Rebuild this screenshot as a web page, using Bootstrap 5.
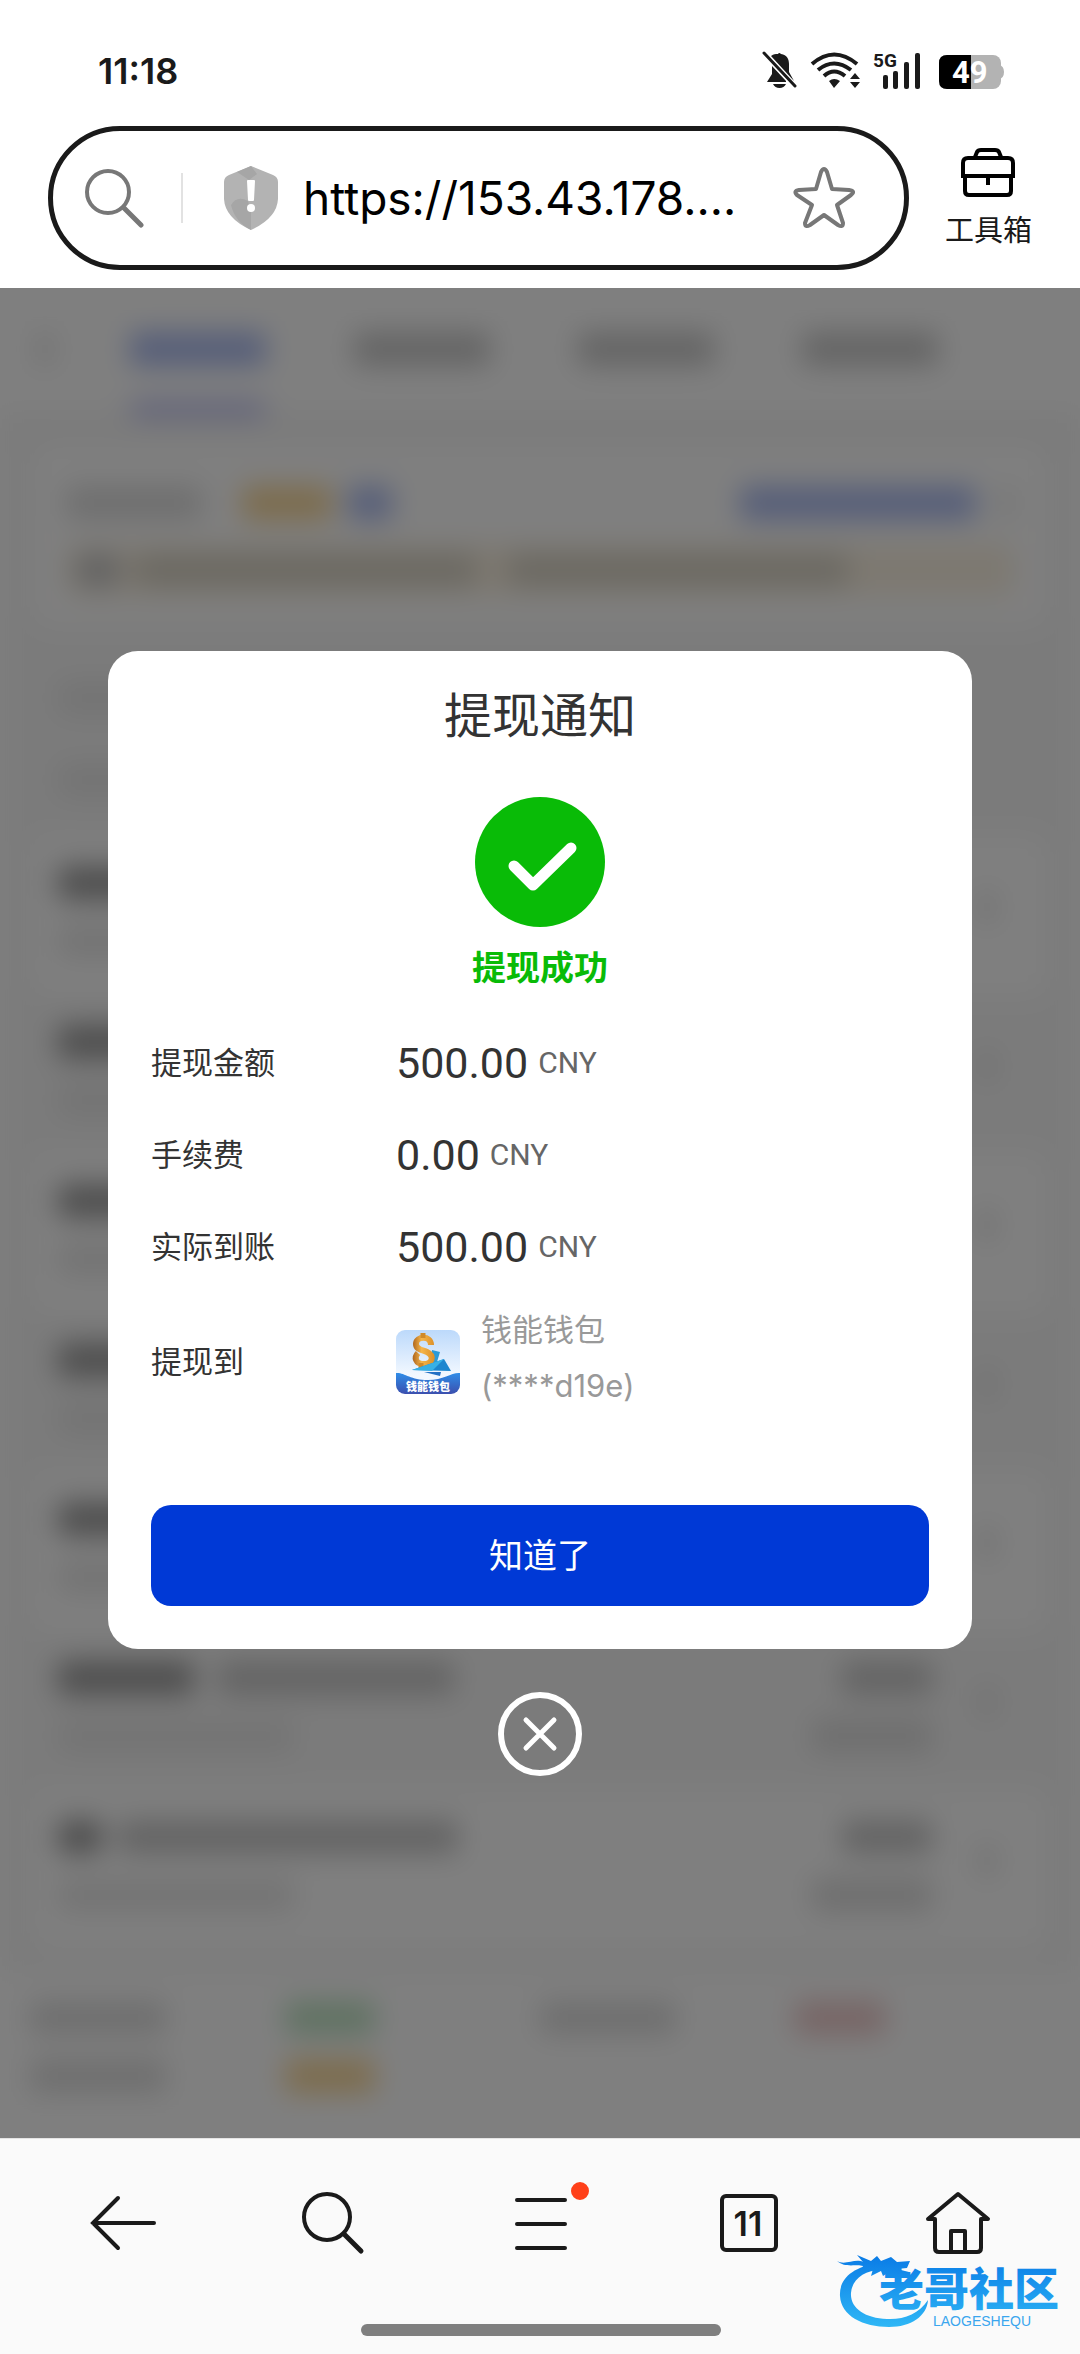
<!DOCTYPE html>
<html lang="zh-CN">
<head>
<meta charset="utf-8">
<meta name="viewport" content="width=device-width, initial-scale=1">
<title>提现通知</title>
<link href="https://cdn.jsdelivr.net/npm/bootstrap@5.3.0/dist/css/bootstrap.min.css" rel="stylesheet">
<style>
  body { font-family: Inter, "Noto Sans CJK SC", sans-serif; color: #333; background: #fff; }
  svg { display: block; flex: none; }
  button { color: inherit; }

  /* phone status bar */
  .status-bar { height: 126px; padding: 15px 71px 0 98px; color: #1a1a1a; }
  .clock { font-size: 36px; font-weight: 600; line-height: 40px; }
  .status-bar text { font-family: Roboto, sans-serif; font-weight: 700; }

  /* address row */
  .address-row { padding: 0 48px 18px; gap: 36px; }
  .address-pill { height: 144px; min-width: 0; border: 5px solid #1a1a1a; padding: 0 48px 0 32px; }
  .address-split { width: 2px; height: 50px; margin: 0 40px 0 36px; background: #e2e2e2; }
  .address-input { flex: 1 1 0; width: 0; border: 0; outline: 0; padding: 0; background: none; font-size: 46px; line-height: 60px; color: #000; }
  .tool-btn { font-size: 29px; line-height: 36px; color: #1a1a1a; white-space: nowrap; }

  /* page behind the dialog */
  .page-behind { background: #f7f7f7; filter: blur(14px); }
  .tab-strip { height: 124px; padding: 44px 38px 0; background: #fff; }
  .tab-strip .blk + .blk { margin-left: 88px; }
  .tab-strip .blk-blue { margin-left: 78px !important; }
  .page-card { background: #fff; border-radius: 20px; margin: 33px 32px 20px; height: 180px; padding: 41px 34px 0; }
  .notice { height: 52px; background: #fbf2e2; border-radius: 10px; padding: 0 10px; }
  .record { height: 159px; margin: 0 32px; padding: 30px 54px 0 26px; border-radius: 16px; }
  .record:nth-child(even) { background: #fff; }
  .record-first { height: 191px; padding-top: 36px; }
  .record-end { width: 120px; }
  .totals { background: #fff; margin-top: 24px; height: 165px; padding: 28px 30px; }
  .blk { display: block; height: 34px; border-radius: 6px; background: #cacaca; }
  .blk-dark { background: #9c9c9c; }
  .blk-mid { background: #c8c8c8; }
  .blk-soft { background: #dedede; }
  .blk-pale { background: #e8e8e8; }
  .blk-blue { background: #acbcf2; }
  .blk-line { background: #b4b8f4; height: 14px; margin: 36px 0 0 92px; }
  .blk-orange { background: #fad898; }
  .blk-olive { background: #d8d3c6; }
  .blk-green { background: #c0e4c4; }
  .blk-red { background: #eecaca; }
  .w-a { width: 14px; } .w-b { width: 44px; } .w-c { width: 90px; }
  .w-d { width: 136px; } .w-e { width: 236px; } .w-f { width: 340px; }

  /* dialog */
  .shade { background: rgba(0, 0, 0, .5); padding: 0 10%; gap: 43px; }
  .notice-dialog { background: #fff; border-radius: 30px; padding: 29px 43px 43px; }
  .dialog-title { font-size: 48px; line-height: 72px; margin-bottom: 45px; }
  .dialog-state { font-size: 34px; line-height: 50px; color: #09bb07; }
  .detail-row { min-height: 92px; }
  .detail-term { width: 245px; font-size: 31px; line-height: 46px; font-weight: 400; }
  .detail-sum { font-family: Roboto, sans-serif; font-size: 43px; line-height: 56px; }
  .detail-unit { font-family: Roboto, sans-serif; font-size: 30px; color: #666; margin-left: 10px; }
  .wallet-row { min-height: 138px; }
  .wallet-value { gap: 21px; }
  .wallet-name { font-size: 31px; line-height: 56px; color: #999; padding-bottom: 8px; }
  .ok-btn { height: 101px; margin-top: 74px; border-radius: 20px; border: 0; background: #0039d6; color: #fff; font-size: 34px; }

  /* browser toolbar */
  .bottom-bar { position: relative; background: #fafafa; border-top: 1px solid #e4e4e4; height: 216px; padding: 0 18px 0 20px; }
  .bottom-tools { height: 168px; }
  .home-pill { width: 360px; height: 12px; border-radius: 6px; background: #7f7f7f; margin: 17px auto 0; }
  .tab-count { font-size: 34px; font-weight: 600; }
  .watermark { right: 13px; bottom: 24px; }
  .wm-name { font-size: 45px; font-weight: 900; }
</style>
</head>
<body class="d-flex flex-column min-vh-100">

<header>
  <div class="status-bar d-flex align-items-center justify-content-between">
    <span class="clock">11:18</span>
    <svg width="248" height="42" viewBox="0 0 248 42" aria-hidden="true">
      <g fill="#1a1a1a">
        <path d="M6 32 L11 24 V16 L25 31 V32Z M10 6 C13 4 14 4 17 4 Q18 2 20 4 C26 5 28 9 28 14 V22 L33 31Z M12 34 H25 Q23 38 18.500 38 Q14 38 12 34Z"/>
        <path d="M3 3 L34 36" stroke="#1a1a1a" stroke-width="3" stroke-linecap="round"/>
        <g fill="none" stroke="#1a1a1a" stroke-width="4">
          <path d="M51 14 Q73 -5 96 14 M57 20 Q73 7 90 20 M63 26 Q73 17 84 26"/>
        </g>
        <path d="M68 31 Q73 27 79 31 L73 38Z M89 29 L94 23 L99 29Z M89 32 H99 L94 38Z"/>
        <rect x="122" y="25" width="5" height="14" rx="2"/>
        <rect x="132" y="21" width="5" height="18" rx="2"/>
        <rect x="143" y="12" width="5" height="27" rx="2"/>
        <rect x="154" y="3" width="5" height="36" rx="2"/>
      </g>
      <text x="112" y="17" font-size="19" fill="#1a1a1a">5G</text>
      <path d="M238 15 Q243 16 243 22 Q243 28 238 29Z" fill="#b3b3b3"/>
      <rect x="178" y="5" width="62" height="34" rx="8" fill="#b3b3b3"/>
      <path d="M210 5 H186 Q178 5 178 13 V31 Q178 39 186 39 H210Z" fill="#000"/>
      <text x="191" y="33" font-size="31" fill="#fff">49</text>
    </svg>
  </div>

  <div class="address-row d-flex align-items-center">
    <div class="address-pill rounded-pill d-flex align-items-center flex-grow-1">
      <svg width="60" height="60" viewBox="0 0 60 60" fill="none" stroke="#777" stroke-width="4" stroke-linecap="round" aria-hidden="true"><circle cx="23" cy="24" r="21"/><path d="M39 40 L56 57" stroke-width="5"/></svg>
      <span class="address-split"></span>
      <svg width="56" height="64" viewBox="0 0 56 64" aria-hidden="true"><path d="M28 0 L50 9 Q55 11 55 16 V33 Q54 52 28 64 Q2 52 1 33 V16 Q1 11 6 9Z" fill="#b3b3b3"/><path d="M8 39 Q14 29 25 35 L28 46 V64 Q12 56 8 39Z M14 6 L28 0 L34 8 L26 14Z" fill="#a6a6a6"/><path d="M25 15 H31 L30 34 H26Z" fill="#fff" stroke="#fff" stroke-width="2" stroke-linejoin="round"/><circle cx="28" cy="42" r="4" fill="#fff"/></svg>
      <label class="visually-hidden" for="address">网址</label>
      <input class="address-input ms-4" id="address" type="text" value="https://153.43.178....">
      <button class="btn p-0 border-0" type="button" aria-label="收藏">
        <svg width="64" height="64" viewBox="0 0 64 64" fill="none" stroke="#777" stroke-width="4" stroke-linejoin="round"><path d="M29 6 Q32 0 35 6 L40 23 L57 24 Q64 25 59 29 L45 39 L51 57 Q51 62 46 59 L32 49 L18 59 Q13 62 13 57 L20 39 L5 29 Q1 25 7 24 L24 23Z"/></svg>
      </button>
    </div>
    <button class="tool-btn btn p-0 border-0 d-flex flex-column align-items-center gap-3" type="button">
      <svg width="56" height="50" viewBox="0 0 56 50" fill="none" stroke="#000" stroke-width="4"><path d="M15 10 L17 5 Q18 3 21 3 H35 Q38 3 39 5 L41 10"/><path d="M3 29 V16 Q3 11 8 11 H48 Q53 11 53 16 V29Z"/><path d="M5 29 V44 Q5 48 9 48 H47 Q51 48 51 44 V29 M28 29 V38"/></svg>
      工具箱
    </button>
  </div>
</header>

<main class="position-relative overflow-hidden flex-grow-1">
  <div class="page-behind" aria-hidden="true">
    <div class="tab-strip">
      <div class="d-flex"><span class="blk w-a blk-soft"></span><span class="blk w-d blk-blue"></span><span class="blk w-d"></span><span class="blk w-d"></span><span class="blk w-d"></span></div>
      <span class="blk blk-line w-d"></span>
    </div>
    <div class="page-card">
      <div class="d-flex gap-3 mb-4">
        <span class="blk w-d blk-soft"></span><span class="blk w-c blk-orange ms-4"></span><span class="blk w-b blk-blue"></span>
        <span class="blk w-e blk-blue ms-auto"></span><span class="blk w-a blk-pale ms-2"></span>
      </div>
      <div class="notice d-flex align-items-center gap-3"><span class="blk w-b blk-mid"></span><span class="blk w-f blk-olive"></span><span class="blk w-f blk-olive ms-3"></span></div>
    </div>
    <div>
      <div class="record record-first"><span class="blk w-c blk-pale mb-5"></span><span class="blk w-e blk-pale mt-2"></span></div>
      <div class="record d-flex align-items-start"><div class="flex-grow-1"><span class="blk w-d blk-dark mb-4"></span><span class="blk w-e blk-pale"></span></div><div class="record-end me-5"><span class="blk w-c ms-auto mb-4"></span><span class="blk blk-pale"></span></div><span class="blk w-a blk-soft mt-4"></span></div>
      <div class="record d-flex align-items-start"><div class="flex-grow-1"><span class="blk w-d blk-dark mb-4"></span><span class="blk w-e blk-pale"></span></div><div class="record-end me-5"><span class="blk w-c ms-auto mb-4"></span><span class="blk blk-pale"></span></div><span class="blk w-a blk-soft mt-4"></span></div>
      <div class="record d-flex align-items-start"><div class="flex-grow-1"><span class="blk w-d blk-dark mb-4"></span><span class="blk w-e blk-pale"></span></div><div class="record-end me-5"><span class="blk w-c ms-auto mb-4"></span><span class="blk blk-pale"></span></div><span class="blk w-a blk-soft mt-4"></span></div>
      <div class="record d-flex align-items-start"><div class="flex-grow-1"><span class="blk w-d blk-dark mb-4"></span><span class="blk w-e blk-pale"></span></div><div class="record-end me-5"><span class="blk w-c ms-auto mb-4"></span><span class="blk blk-pale"></span></div><span class="blk w-a blk-soft mt-4"></span></div>
      <div class="record d-flex align-items-start"><div class="flex-grow-1"><span class="blk w-d blk-dark mb-4"></span><span class="blk w-e blk-pale"></span></div><div class="record-end me-5"><span class="blk w-c ms-auto mb-4"></span><span class="blk blk-pale"></span></div><span class="blk w-a blk-soft mt-4"></span></div>
      <div class="record d-flex align-items-start"><div class="flex-grow-1"><div class="d-flex gap-4 mb-4"><span class="blk w-d blk-dark"></span><span class="blk w-e blk-mid"></span></div><span class="blk w-e blk-pale"></span></div><div class="record-end me-5"><span class="blk w-c ms-auto mb-4 blk-mid"></span><span class="blk blk-soft"></span></div><span class="blk w-a blk-soft mt-4"></span></div>
      <div class="record d-flex align-items-start"><div class="flex-grow-1"><div class="d-flex gap-3 mb-4"><span class="blk w-b blk-dark"></span><span class="blk w-f blk-mid"></span></div><span class="blk w-e blk-pale"></span></div><div class="record-end me-5"><span class="blk w-c ms-auto mb-4 blk-mid"></span><span class="blk blk-soft"></span></div><span class="blk w-a blk-soft mt-4"></span></div>
    </div>
    <div class="totals">
      <div class="row g-0 mb-4"><div class="col-3"><span class="blk w-d blk-soft"></span></div><div class="col-3"><span class="blk w-c blk-green"></span></div><div class="col-3"><span class="blk w-d blk-soft"></span></div><div class="col-3"><span class="blk w-c blk-red"></span></div></div>
      <div class="row g-0"><div class="col-3"><span class="blk w-d blk-soft"></span></div><div class="col-3"><span class="blk w-c blk-orange"></span></div></div>
    </div>
  </div>

  <div class="shade position-absolute top-0 start-0 w-100 h-100 d-flex flex-column align-items-center justify-content-center">
    <section class="notice-dialog w-100" role="dialog" aria-labelledby="dialog-title">
      <h1 class="dialog-title fw-normal text-center" id="dialog-title">提现通知</h1>
      <svg class="mx-auto" width="130" height="130" viewBox="0 0 130 130" aria-hidden="true"><circle cx="65" cy="65" r="65" fill="#09bb07"/><path d="M39 69 L58 88 L96 51" fill="none" stroke="#fff" stroke-width="11" stroke-linecap="round" stroke-linejoin="round"/></svg>
      <p class="dialog-state fw-bold text-center mt-3 mb-4">提现成功</p>
      <dl class="mb-0">
        <div class="detail-row d-flex align-items-center"><dt class="detail-term">提现金额</dt><dd class="mb-0 d-flex align-items-center"><span class="detail-sum">500.00</span><span class="detail-unit">CNY</span></dd></div>
        <div class="detail-row d-flex align-items-center"><dt class="detail-term">手续费</dt><dd class="mb-0 d-flex align-items-center"><span class="detail-sum">0.00</span><span class="detail-unit">CNY</span></dd></div>
        <div class="detail-row d-flex align-items-center"><dt class="detail-term">实际到账</dt><dd class="mb-0 d-flex align-items-center"><span class="detail-sum">500.00</span><span class="detail-unit">CNY</span></dd></div>
        <div class="wallet-row d-flex align-items-center"><dt class="detail-term">提现到</dt>
          <dd class="wallet-value mb-0 d-flex align-items-center">
            <svg width="64" height="64" viewBox="0 0 64 64" aria-hidden="true">
              <defs>
                <linearGradient id="sky" x1="0" y1="0" x2="0" y2="1"><stop offset="0" stop-color="#bcd9fb"/><stop offset=".7" stop-color="#f2f8ff"/></linearGradient>
                <linearGradient id="wave" x1="0" y1="0" x2="0" y2="1"><stop offset="0" stop-color="#2f8de8"/><stop offset="1" stop-color="#3b4fae"/></linearGradient>
                <linearGradient id="gold" gradientUnits="userSpaceOnUse" x1="16" y1="0" x2="40" y2="0"><stop offset="0" stop-color="#a85e18"/><stop offset=".4" stop-color="#f5b54a"/><stop offset="1" stop-color="#d98b24"/></linearGradient>
                <clipPath id="tile"><rect width="64" height="64" rx="9"/></clipPath>
              </defs>
              <g clip-path="url(#tile)">
                <rect width="64" height="64" fill="url(#sky)"/>
                <path d="M36 20 L44 22 L41 32 L34 34Z" fill="#2a9bd8"/>
                <path d="M35 15 C35 5 20 6 20 14 C20 20 27 20 31 22 C39 26 36 34 28 34 C19 34 18 27 22 23" fill="none" stroke="url(#gold)" stroke-width="6"/>
                <path d="M27 8 V3 M25 38 V33" stroke="#d08a2a" stroke-width="5"/>
                <path d="M16 40 L48 29 L55 41Z" fill="#1c86cf"/><path d="M16 40 L48 29 L36 41Z" fill="#37b0e6"/>
                <path d="M28 42 L45 42 L44 46Z" fill="#2370c4"/>
                <path d="M0 43 C8 42 14 50 32 50 C48 50 56 42 64 43 V64 H0Z" fill="url(#wave)"/>
                <text x="32" y="61" text-anchor="middle" font-family="Noto Sans CJK SC, sans-serif" font-size="11" font-weight="900" fill="#fff">钱能钱包</text>
              </g>
            </svg>
            <span class="wallet-name">钱能钱包<br>(****d19e)</span>
          </dd>
        </div>
      </dl>
      <button class="ok-btn btn w-100 p-0" type="button">知道了</button>
    </section>
    <button class="btn p-0 border-0" type="button" aria-label="关闭">
      <svg width="84" height="84" viewBox="0 0 84 84" fill="none" stroke="#fff" stroke-linecap="round"><circle cx="42" cy="42" r="39" stroke-width="6"/><path d="M28 28 L56 56 M56 28 L28 56" stroke-width="5"/></svg>
    </button>
  </div>
</main>

<footer class="bottom-bar">
  <nav class="bottom-tools row g-0 align-items-center text-dark" aria-label="浏览器工具栏">
    <div class="col d-flex justify-content-center"><button class="btn p-0 border-0" type="button" aria-label="返回"><svg width="68" height="68" viewBox="0 0 68 68" fill="none" stroke="#1a1a1a" stroke-width="4" stroke-linecap="round"><path d="M3 34 H64 M28 9 L3 34 L28 59"/></svg></button></div>
    <div class="col d-flex justify-content-center"><button class="btn p-0 border-0" type="button" aria-label="搜索"><svg width="64" height="64" viewBox="0 0 64 64" fill="none" stroke="#1a1a1a" stroke-width="4" stroke-linecap="round"><circle cx="26" cy="26" r="23"/><path d="M43 43 L60 60" stroke-width="5"/></svg></button></div>
    <div class="col d-flex justify-content-center"><button class="btn p-0 border-0" type="button" aria-label="菜单"><svg width="100" height="88" viewBox="0 -4 100 88" fill="none" stroke="#1a1a1a" stroke-width="4" stroke-linecap="round"><path d="M26 17 H74 M26 41 H74 M26 65 H74"/><circle cx="89" cy="8" r="7" fill="#ff4019" stroke="#ff4019"/></svg></button></div>
    <div class="col d-flex justify-content-center"><button class="btn p-0 border-0" type="button" aria-label="11 个标签页"><svg width="60" height="60" viewBox="0 0 60 60" aria-hidden="true"><rect x="3" y="3" width="54" height="54" rx="4" fill="none" stroke="#1a1a1a" stroke-width="4"/><text class="tab-count" x="29" y="43" text-anchor="middle" fill="#1a1a1a">11</text></svg></button></div>
    <div class="col d-flex justify-content-center"><button class="btn p-0 border-0" type="button" aria-label="主页"><svg width="68" height="64" viewBox="0 0 68 64" fill="none" stroke="#1a1a1a" stroke-width="4" stroke-linejoin="round" stroke-linecap="round"><path d="M11 28 H4 L34 3 L64 28 H57 V57 Q57 61 53 61 H15 Q11 61 11 57Z M27 61 V40 H41 V61"/></svg></button></div>
  </nav>
  <div class="home-pill"></div>
  <svg class="watermark position-absolute" width="230" height="80" viewBox="0 0 230 80" role="img" aria-label="老哥社区">
    <defs><linearGradient id="wm" gradientUnits="userSpaceOnUse" x1="0" y1="5" x2="0" y2="78"><stop offset="0" stop-color="#0a7be6"/><stop offset="1" stop-color="#2fb8f6"/></linearGradient></defs>
    <g fill="url(#wm)">
      <path d="M42 13 C14 17 2 30 3 46 C4 66 26 77 52 77 C74 77 90 66 91 50 C82 64 66 70 50 69 C28 68 13 58 14 43 C15 29 28 20 44 20Z"/>
      <path d="M0 11 C8 16 18 8 26 12 L20 5 L34 11 L40 6 L44 11 L54 7 L60 12 L73 11 L70 18 L60 19 L72 22 L62 25 L52 22 L46 26 L44 21 L34 26 L36 19 L24 22 L26 16 C16 14 8 18 0 11Z"/>
    </g>
    <text class="wm-name" x="42" y="56" fill="url(#wm)">老哥社区</text>
    <text x="96" y="76" font-family="Liberation Sans, sans-serif" font-size="14" fill="#3aa6ee">LAOGESHEQU</text>
  </svg>
</footer>

<script src="https://cdn.jsdelivr.net/npm/bootstrap@5.3.0/dist/js/bootstrap.bundle.min.js"></script>
</body>
</html>
